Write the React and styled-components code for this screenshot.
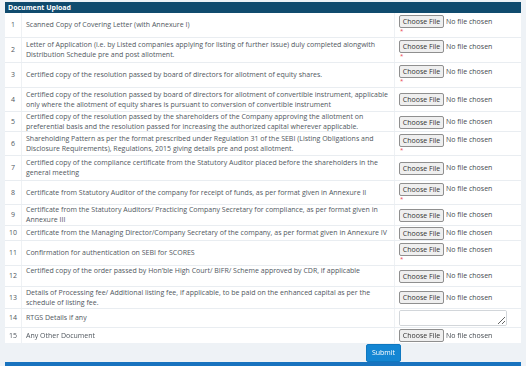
import styled, { createGlobalStyle } from 'styled-components';

const GlobalStyle = createGlobalStyle`
	body {
		margin: 0;
		background: #eef2f6;
		font-family: 'Open Sans', 'Liberation Sans', sans-serif;
		color: #50575e;
	}
`;

const rows = [
	{ n: 1, lines: ['Scanned Copy of Covering Letter (with Annexure I)'], h: 24, req: true },
	{
		n: 2,
		lines: [
			'Letter of Application (i.e. by Listed companies applying for listing of further issue) duly completed alongwith',
			'Distribution Schedule pre and post allotment.',
		],
		h: 25,
		req: true,
	},
	{ n: 3, lines: ['Certified copy of the resolution passed by board of directors for allotment of equity shares.'], h: 25, req: true },
	{
		n: 4,
		lines: [
			'Certified copy of the resolution passed by board of directors for allotment of convertible instrument, applicable',
			'only where the allotment of equity shares is pursuant to conversion of convertible instrument',
		],
		h: 24,
	},
	{
		n: 5,
		lines: [
			'Certified copy of the resolution passed by the shareholders of the Company approving the allotment on',
			'preferential basis and the resolution passed for increasing the authorized capital wherever applicable.',
		],
		h: 20,
	},
	{
		n: 6,
		lines: [
			'Shareholding Pattern as per the format prescribed under Regulation 31 of the SEBI (Listing Obligations and',
			'Disclosure Requirements), Regulations, 2015 giving details pre and post allotment.',
		],
		h: 24,
		req: true,
	},
	{
		n: 7,
		lines: [
			'Certified copy of the compliance certificate from the Statutory Auditor placed before the shareholders in the',
			'general meeting',
		],
		h: 25,
	},
	{ n: 8, lines: ['Certificate from Statutory Auditor of the company for receipt of funds, as per format given in Annexure II'], h: 24, req: true },
	{
		n: 9,
		lines: [
			'Certificate from the Statutory Auditors/ Practicing Company Secretary for compliance, as per format given in',
			'Annexure III',
		],
		h: 21,
	},
	{ n: 10, lines: ['Certificate from the Managing Director/Company Secretary of the company, as per format given in Annexure IV'], h: 15 },
	{ n: 11, lines: ['Confirmation for authentication on SEBI for SCORES'], h: 25, req: true },
	{ n: 12, lines: ['Certified copy of the order passed by Hon\u2019ble High Court/ BIFR/ Scheme approved by CDR, if applicable', '\u00a0'], h: 21 },
	{
		n: 13,
		lines: [
			'Details of Processing fee/ Additional listing fee, if applicable, to be paid on the enhanced capital as per the',
			'schedule of listing fee.',
		],
		h: 22,
	},
	{ n: 14, lines: ['RTGS Details if any'], h: 19, note: true },
	{ n: 15, lines: ['Any Other Document'], h: 16 },
];

const Page = styled.div`
	padding: 2px 5px 0 5px;
	width: 516px;
`;

const Panel = styled.section`
	background: #ffffff;
`;

const PanelHeader = styled.div`
	height: 11px;
	background: #104b6e;
	color: #ffffff;
	font-size: 7px;
	font-weight: 700;
	line-height: 11px;
	padding-left: 3px;
`;

const List = styled.div`
	display: flex;
	flex-direction: column;
	font-size: 7px;
	line-height: 10px;
`;

const Row = styled.div`
	box-sizing: border-box;
	display: grid;
	grid-template-columns: 17px 373px 1fr;
	height: ${(p) => p.h}px;
	border-top: ${(p) => (p.first ? 'none' : '1px solid #e9edf1')};
`;

const NumCell = styled.div`
	display: flex;
	align-items: center;
	justify-content: center;
	border-right: 1px solid #eef1f4;
`;

const DescCell = styled.div`
	display: flex;
	flex-direction: column;
	justify-content: center;
	padding-left: 4px;
	white-space: nowrap;
	border-right: 1px solid #eef1f4;
`;

const FileCell = styled.div`
	display: flex;
	flex-direction: column;
	justify-content: center;
	padding-left: 4px;
`;

const FileInput = styled.div`
	display: flex;
	align-items: center;
	gap: 2px;
	white-space: nowrap;
`;

const ChooseButton = styled.button`
	box-sizing: border-box;
	width: 45px;
	height: 13px;
	padding: 0;
	font-family: inherit;
	font-size: 7px;
	color: #333333;
	background: #efefef;
	border: 1px solid #8f8f8f;
	border-radius: 2px;
`;

const NoFile = styled.span`
	font-size: 7px;
	color: #444a50;
`;

const Required = styled.div`
	color: #e8414b;
	font-size: 6px;
	line-height: 6px;
	height: 7px;
	padding-left: 1px;
`;

const Note = styled.textarea`
	box-sizing: border-box;
	display: block;
	width: 108px;
	height: 16px;
	margin: 0;
	border: 1px solid #d2d6da;
	border-radius: 2px;
	resize: vertical;
`;

const Footer = styled.div`
	height: 19px;
	display: flex;
	align-items: center;
	padding-left: 361px;
`;

const Submit = styled.button`
	width: 35px;
	height: 18px;
	padding: 0;
	font-family: inherit;
	font-size: 7px;
	color: #ffffff;
	background: #1486d3;
	border: 1px solid #0f78c0;
	border-radius: 2px;
`;

const NextBar = styled.div`
	height: 8px;
	background: #1873bf;
`;

export default function App() {
	return (
		<>
			<GlobalStyle />
			<Page>
				<Panel>
					<PanelHeader>Document Upload</PanelHeader>
					<List>
						{rows.map((r, i) => (
							<Row key={r.n} h={r.h} first={i === 0}>
								<NumCell>{r.n}</NumCell>
								<DescCell>
									{r.lines.map((l, j) => (
										<div key={j}>{l}</div>
									))}
								</DescCell>
								<FileCell>
									{r.note ? (
										<Note />
									) : (
										<FileInput>
											<ChooseButton>Choose File</ChooseButton>
											<NoFile>No file chosen</NoFile>
										</FileInput>
									)}
									{r.req && <Required>*</Required>}
								</FileCell>
							</Row>
						))}
					</List>
				</Panel>
				<Footer>
					<Submit>Submit</Submit>
				</Footer>
				<NextBar />
			</Page>
		</>
	);
}
